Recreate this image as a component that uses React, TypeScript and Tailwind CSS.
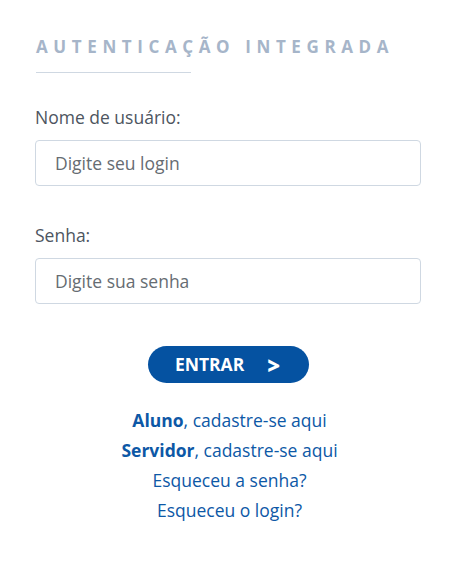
import React from "react";

export default function App() {
  return (
    <div className="min-h-screen w-full bg-white font-['Open_Sans',sans-serif]">
      <div className="pl-[35px] pr-[37px] pt-[35px]">
        {/* Title */}
        <h2 className="pl-px text-[17px] font-bold leading-6 tracking-[0.33em] text-[#a6b5c9] uppercase">
          Autenticação Integrada
        </h2>
        <div className="ml-px mt-[13px] h-px w-[155px] bg-[#cfd8e2]" />

        {/* Login */}
        <label className="mt-[32px] block text-[17.5px] leading-6 text-[#4d5560]">
          Nome de usuário:
        </label>
        <input
          type="text"
          placeholder="Digite seu login"
          className="mt-[11px] block h-[46px] w-full rounded-[4px] border border-[#cfd8e2] bg-white px-[19px] text-[17.5px] text-[#555] placeholder:text-[#666c72] outline-none"
        />

        {/* Senha */}
        <label className="mt-[37px] block text-[17.5px] leading-6 text-[#4d5560]">
          Senha:
        </label>
        <input
          type="password"
          placeholder="Digite sua senha"
          className="mt-[11px] block h-[46px] w-full rounded-[4px] border border-[#cfd8e2] bg-white px-[19px] text-[17.5px] text-[#555] placeholder:text-[#666c72] outline-none"
        />

        {/* Button */}
        <div className="mt-[42px] flex justify-center pl-px">
          <button className="flex h-[37px] w-[161px] items-center justify-center gap-[23px] rounded-full bg-[#0552a1] pr-[2px] text-[17.5px] font-bold text-white">
            <span>ENTRAR</span>
            <span className="text-[22px] font-extrabold leading-none">&gt;</span>
          </button>
        </div>

        {/* Links */}
        <div className="mt-[22px] flex flex-col items-center pl-[3px] text-[17.5px] leading-[30px] text-[#0d58a6]">
          <a><span className="font-bold">Aluno</span>, cadastre-se aqui</a>
          <a><span className="font-bold">Servidor</span>, cadastre-se aqui</a>
          <a>Esqueceu a senha?</a>
          <a>Esqueceu o login?</a>
        </div>
      </div>
    </div>
  );
}
